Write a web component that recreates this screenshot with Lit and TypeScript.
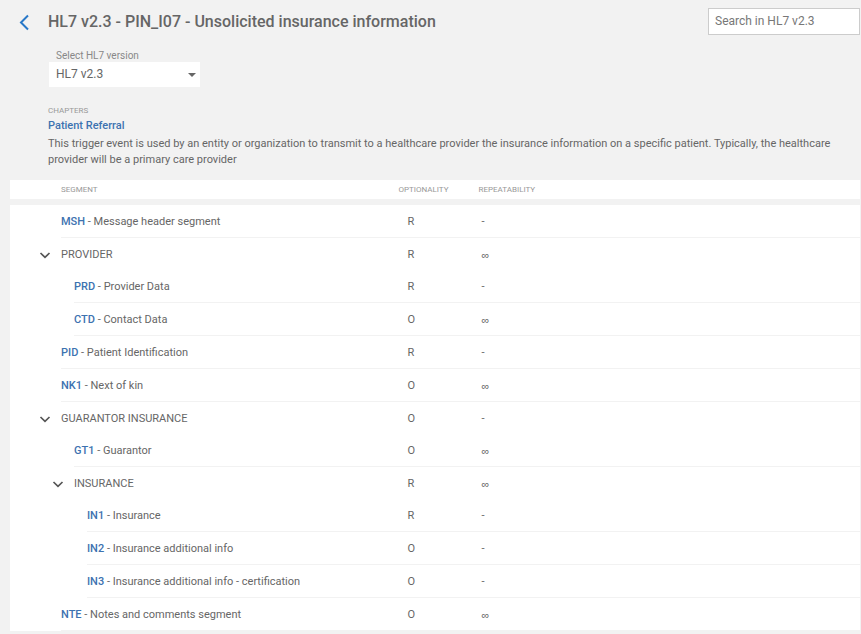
import { LitElement, html, css, nothing } from "lit";
import { customElement, state } from "lit/decorators.js";
import { classMap } from "lit/directives/class-map.js";

interface Segment {
  id: string;
  code?: string;
  name: string;
  level: number;
  optionality: string;
  repeat: string;
  parents?: string[];
}

const SEGMENTS: Segment[] = [
  { id: "msh", code: "MSH", name: "Message header segment", level: 0, optionality: "R", repeat: "-" },
  { id: "provider", name: "PROVIDER", level: 0, optionality: "R", repeat: "∞" },
  { id: "prd", code: "PRD", name: "Provider Data", level: 1, optionality: "R", repeat: "-", parents: ["provider"] },
  { id: "ctd", code: "CTD", name: "Contact Data", level: 1, optionality: "O", repeat: "∞", parents: ["provider"] },
  { id: "pid", code: "PID", name: "Patient Identification", level: 0, optionality: "R", repeat: "-" },
  { id: "nk1", code: "NK1", name: "Next of kin", level: 0, optionality: "O", repeat: "∞" },
  { id: "guarantor", name: "GUARANTOR INSURANCE", level: 0, optionality: "O", repeat: "-" },
  { id: "gt1", code: "GT1", name: "Guarantor", level: 1, optionality: "O", repeat: "∞", parents: ["guarantor"] },
  { id: "insurance", name: "INSURANCE", level: 1, optionality: "R", repeat: "∞", parents: ["guarantor"] },
  { id: "in1", code: "IN1", name: "Insurance", level: 2, optionality: "R", repeat: "-", parents: ["guarantor", "insurance"] },
  { id: "in2", code: "IN2", name: "Insurance additional info", level: 2, optionality: "O", repeat: "-", parents: ["guarantor", "insurance"] },
  { id: "in3", code: "IN3", name: "Insurance additional info - certification", level: 2, optionality: "O", repeat: "-", parents: ["guarantor", "insurance"] },
  { id: "nte", code: "NTE", name: "Notes and comments segment", level: 0, optionality: "O", repeat: "∞" },
];

@customElement("segment-table")
export class SegmentTable extends LitElement {
  @state() private closed: string[] = [];

  static styles = css`
    :host {
      display: block;
    }
    table {
      width: 100%;
      table-layout: fixed;
      border-collapse: separate;
      border-spacing: 0;
      background: #fff;
    }
    .col-opt {
      width: 80px;
    }
    .col-rep {
      width: 45%;
    }
    th {
      height: 19px;
      padding: 0 0 0 1px;
      border-bottom: 6px solid #f2f2f2;
      font-size: 8px;
      line-height: 19px;
      font-weight: 400;
      text-align: left;
      color: #999;
    }
    th:first-child {
      padding-left: 51px;
    }
    td {
      box-sizing: border-box;
      height: 33px;
      padding: 2px 0 0;
      line-height: 30px;
      border-bottom: 1px solid #f2f2f2;
    }
    td.seg {
      padding: 0;
      border-bottom: none;
      vertical-align: top;
    }
    .group td {
      height: 32px;
      border-bottom: none;
    }
    td.opt {
      padding-left: 10px;
    }
    td.rep {
      padding-left: 4px;
    }
    .many {
      font-family: "Liberation Sans", sans-serif;
    }
    .cell {
      box-sizing: border-box;
      display: flex;
      align-items: center;
      height: 33px;
      margin-left: 51px;
      padding-top: 2px;
      border-bottom: 1px solid #f2f2f2;
      line-height: 16px;
      white-space: pre;
    }
    .level1 {
      margin-left: 64px;
    }
    .level2 {
      margin-left: 77px;
    }
    .group .cell {
      height: 32px;
      margin-left: 29px;
      border-bottom: none;
    }
    .group .level1 {
      margin-left: 42px;
    }
    a {
      color: #3d72b0;
      font-weight: 500;
      text-decoration: none;
    }
    button {
      display: flex;
      align-items: center;
      gap: 10px;
      padding: 0;
      border: 0;
      background: none;
      color: inherit;
      font: inherit;
      cursor: pointer;
    }
    .chevron {
      width: 12px;
      height: 12px;
    }
    .chevron.shut {
      transform: rotate(-90deg);
    }
  `;

  private toggle(id: string) {
    this.closed = this.closed.includes(id)
      ? this.closed.filter((c) => c !== id)
      : [...this.closed, id];
  }

  private row(s: Segment) {
    if (s.parents?.some((p) => this.closed.includes(p))) return nothing;
    const shut = this.closed.includes(s.id);
    return html`<tr class=${s.code ? "leaf" : "group"}>
      <td class="seg">
        <div class=${classMap({ cell: true, level1: s.level === 1, level2: s.level === 2 })}>${s.code
          ? html`<a href="#${s.code}">${s.code}</a><span> - ${s.name}</span>`
          : html`<button type="button" aria-expanded=${shut ? "false" : "true"} @click=${() => this.toggle(s.id)}><svg class=${classMap({ chevron: true, shut })} viewBox="0 0 12 12" aria-hidden="true"><path d="M1.5 4 6 8.3 10.5 4" fill="none" stroke="#555" stroke-width="1.7" /></svg><span>${s.name}</span></button>`}</div>
      </td>
      <td class="opt">${s.optionality}</td>
      <td class=${classMap({ rep: true, many: s.repeat === "∞" })}>${s.repeat}</td>
    </tr>`;
  }

  render() {
    return html`<table>
      <colgroup>
        <col />
        <col class="col-opt" />
        <col class="col-rep" />
      </colgroup>
      <thead>
        <tr>
          <th scope="col">SEGMENT</th>
          <th scope="col">OPTIONALITY</th>
          <th scope="col">REPEATABILITY</th>
        </tr>
      </thead>
      <tbody>
        ${SEGMENTS.map((s) => this.row(s))}
      </tbody>
    </table>`;
  }
}

@customElement("app-root")
export class AppRoot extends LitElement {
  static styles = css`
    :host {
      display: block;
      box-sizing: border-box;
      min-height: 100vh;
      padding: 8px 1px 3px 10px;
      background: #f2f2f2;
      color: #666;
      font: 11px/16px Roboto, "Liberation Sans", sans-serif;
    }
    header {
      display: flex;
      align-items: flex-start;
    }
    .back {
      display: flex;
      justify-content: center;
      width: 28px;
      padding-top: 6px;
      margin-right: 10px;
    }
    .back svg {
      width: 12px;
      height: 17px;
    }
    h1 {
      flex: 1;
      margin: 0;
      font-size: 16px;
      line-height: 27px;
      font-weight: 500;
      color: #666;
    }
    .search {
      box-sizing: border-box;
      width: 152px;
      height: 27px;
      padding: 0 6px 2px;
      border: 1px solid #ccc;
      border-radius: 0;
      background: #fff;
      color: #666;
      font: 12px/16px Roboto, "Liberation Sans", sans-serif;
    }
    .search::placeholder {
      color: #777;
      opacity: 1;
    }
    .intro {
      padding: 14px 12px 12px 38px;
    }
    .intro label {
      display: block;
      padding-left: 8px;
      font-size: 10px;
      line-height: 13px;
      color: #888;
    }
    .picker {
      display: grid;
      align-items: center;
      width: 152px;
    }
    .picker > * {
      grid-area: 1 / 1;
    }
    select {
      appearance: none;
      height: 25px;
      margin: 0 0 0 1px;
      padding: 0 20px 2px 7px;
      border: 0;
      border-radius: 0;
      background: #fff;
      color: #666;
      font: 12px/16px Roboto, "Liberation Sans", sans-serif;
    }
    .arrow {
      justify-self: end;
      width: 8px;
      height: 4px;
      margin-right: 4px;
      pointer-events: none;
    }
    h2 {
      margin: 17px 0 0;
      font-size: 8px;
      line-height: 13px;
      font-weight: 400;
      color: #999;
    }
    .chapter {
      display: block;
      margin-bottom: 1px;
      line-height: 18px;
      color: #3d72b0;
      font-weight: 500;
      text-decoration: none;
    }
    p {
      margin: 0;
    }
  `;

  render() {
    return html`
      <header>
        <a class="back" href="#back" aria-label="Back"><svg viewBox="0 0 12 17" aria-hidden="true"><path d="M10 1.5 3 8.5 10 15.5" fill="none" stroke="#2878c8" stroke-width="2" /></svg></a>
        <h1>HL7 v2.3 - PIN_I07 - Unsolicited insurance information</h1>
        <input class="search" type="text" aria-label="Search in HL7 v2.3" placeholder="Search in HL7 v2.3" />
      </header>
      <section class="intro">
        <label for="version">Select HL7 version</label>
        <div class="picker">
          <select id="version">
            <option>HL7 v2.3</option>
          </select>
          <svg class="arrow" viewBox="0 0 8 4" aria-hidden="true"><path d="M0 0H8L4 4Z" fill="#666" /></svg>
        </div>
        <h2>CHAPTERS</h2>
        <a class="chapter" href="#chapter">Patient Referral</a>
        <p>This trigger event is used by an entity or organization to transmit to a healthcare provider the insurance information on a specific patient. Typically, the healthcare provider will be a primary care provider</p>
      </section>
      <segment-table></segment-table>
    `;
  }
}
